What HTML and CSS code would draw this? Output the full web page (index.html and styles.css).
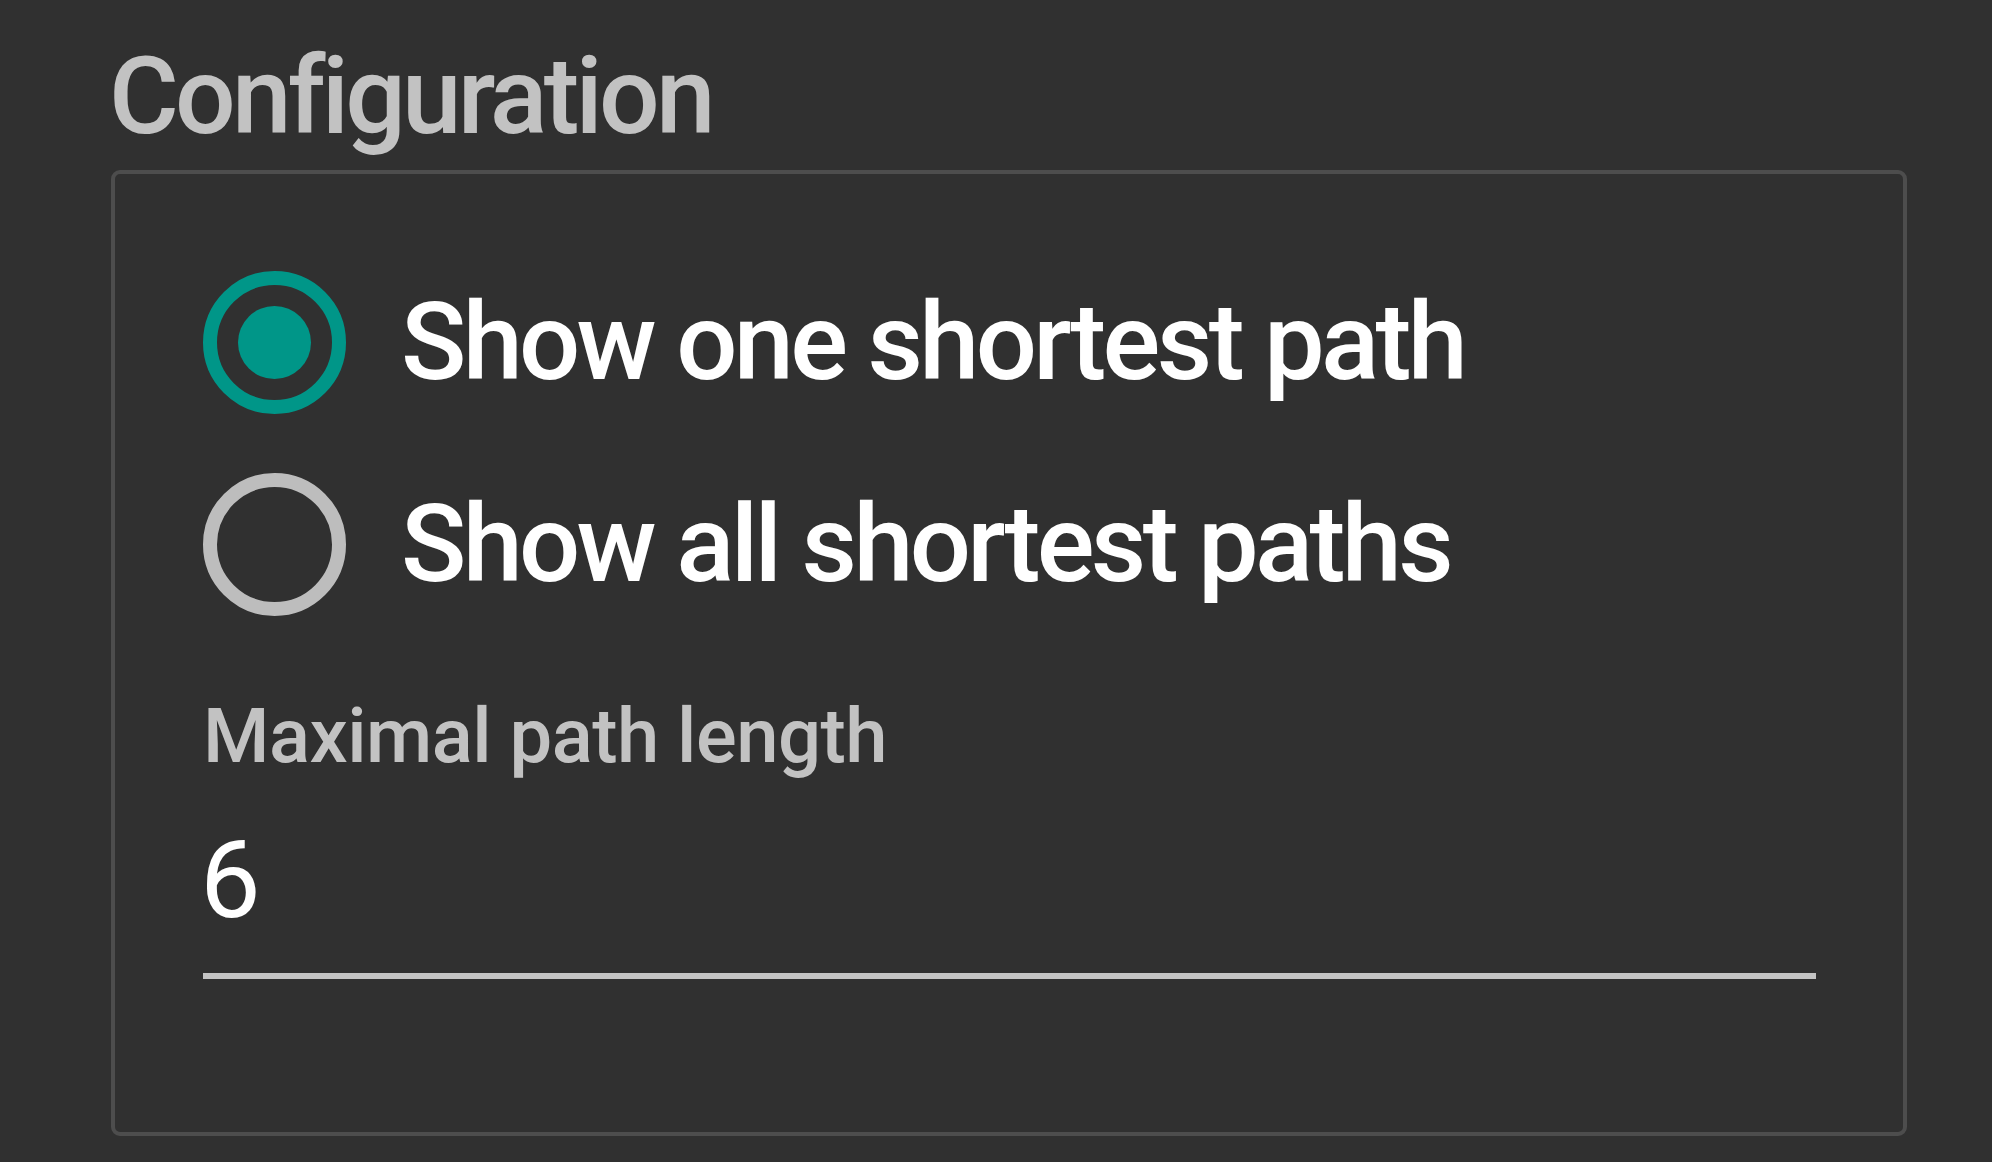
FILE: index.html
```html
<!DOCTYPE html>
<html lang="en">
<head>
<meta charset="utf-8">
<title>Configuration</title>
<link rel="stylesheet" href="styles.css">
</head>
<body>
<div class="page">
  <h2 class="title">Configuration</h2>
  <div class="panel">
    <div class="radio-group">
      <label class="radio-row">
        <span class="radio checked"><span class="dot"></span></span>
        <span class="radio-label">Show one shortest path</span>
      </label>
      <label class="radio-row">
        <span class="radio"></span>
        <span class="radio-label">Show all shortest paths</span>
      </label>
    </div>
    <div class="field">
      <div class="field-label">Maximal path length</div>
      <div class="field-input">6</div>
    </div>
  </div>
</div>
</body>
</html>
```

FILE: styles.css
```css
html, body {
  margin: 0;
  padding: 0;
  background: #303030;
}

body {
  width: 1992px;
  height: 1162px;
  overflow: hidden;
  font-family: Roboto, "Noto Sans", "Liberation Sans", sans-serif;
}

.page {
  padding: 43px 85px 0 111px;
}

.title {
  margin: 0 0 20px -2px;
  font-size: 107px;
  line-height: 1;
  font-weight: 500;
  color: #c2c2c2;
  letter-spacing: -3.8px;
}

.panel {
  width: 1796px;
  height: 966px;
  box-sizing: border-box;
  border: 4px solid #4d4d4d;
  border-radius: 9px;
  padding: 67px 88px 0 88px;
}

.radio-group {
  display: flex;
  flex-direction: column;
}

.radio-row {
  display: flex;
  align-items: center;
  height: 202px;
  gap: 55px;
}

.radio {
  width: 143px;
  height: 143px;
  box-sizing: border-box;
  border: 14px solid #bdbdbd;
  border-radius: 50%;
  display: flex;
  align-items: center;
  justify-content: center;
  flex: none;
}

.radio.checked {
  border-color: #009688;
}

.dot {
  width: 73px;
  height: 73px;
  border-radius: 50%;
  background: #009688;
}

.radio-label {
  font-size: 108px;
  line-height: 1;
  font-weight: 500;
  color: #ffffff;
  letter-spacing: -3.7px;
}

.field {
  margin-top: 53px;
  width: 1613px;
}

.field-label {
  font-size: 76px;
  line-height: 1;
  font-weight: 500;
  color: #c2c2c2;
  letter-spacing: -0.5px;
}

.field-input {
  margin-top: 52px;
  font-size: 108px;
  line-height: 1;
  color: #ffffff;
  padding: 0 0 39px 0;
  text-indent: -3px;
  border-bottom: 6px solid #c4c4c4;
}
```
